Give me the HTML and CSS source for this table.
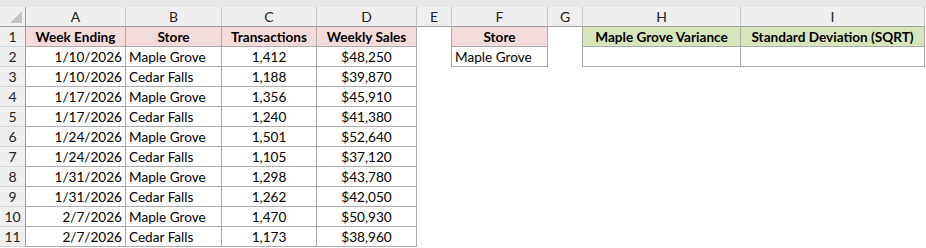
FILE: index.html
```html
<!DOCTYPE html>
<html>
<head>
<meta charset="utf-8">
<link rel="stylesheet" href="styles.css">
</head>
<body>
<div class="sheet">
  <div class="strip"></div>
  <div class="grid">
    <div class="ch corner"><span class="tri"></span></div>
    <div class="ch">A</div><div class="ch">B</div><div class="ch">C</div><div class="ch">D</div><div class="ch">E</div><div class="ch">F</div><div class="ch">G</div><div class="ch">H</div><div class="ch">I</div>

    <div class="rn">1</div>
    <div class="c b hdr pink">Week Ending</div><div class="c b hdr pink">Store</div><div class="c b hdr pink">Transactions</div><div class="c b hdr pink">Weekly Sales</div>
    <div class="c br"></div><div class="c b hdr pink">Store</div><div class="c br"></div>
    <div class="c b hdr green">Maple Grove Variance</div><div class="c b hdr green">Standard Deviation (SQRT)</div>

    <div class="rn">2</div>
    <div class="c b r">1/10/2026</div><div class="c b l">Maple Grove</div><div class="c b m">1,412</div><div class="c b m">$48,250</div>
    <div class="c br"></div><div class="c b l">Maple Grove</div><div class="c br"></div><div class="c b"></div><div class="c b"></div>

    <div class="rn">3</div>
    <div class="c b r">1/10/2026</div><div class="c b l">Cedar Falls</div><div class="c b m">1,188</div><div class="c b m">$39,870</div>
    <div class="c"></div><div class="c"></div><div class="c"></div><div class="c"></div><div class="c"></div>

    <div class="rn">4</div>
    <div class="c b r">1/17/2026</div><div class="c b l">Maple Grove</div><div class="c b m">1,356</div><div class="c b m">$45,910</div>
    <div class="c"></div><div class="c"></div><div class="c"></div><div class="c"></div><div class="c"></div>

    <div class="rn">5</div>
    <div class="c b r">1/17/2026</div><div class="c b l">Cedar Falls</div><div class="c b m">1,240</div><div class="c b m">$41,380</div>
    <div class="c"></div><div class="c"></div><div class="c"></div><div class="c"></div><div class="c"></div>

    <div class="rn">6</div>
    <div class="c b r">1/24/2026</div><div class="c b l">Maple Grove</div><div class="c b m">1,501</div><div class="c b m">$52,640</div>
    <div class="c"></div><div class="c"></div><div class="c"></div><div class="c"></div><div class="c"></div>

    <div class="rn">7</div>
    <div class="c b r">1/24/2026</div><div class="c b l">Cedar Falls</div><div class="c b m">1,105</div><div class="c b m">$37,120</div>
    <div class="c"></div><div class="c"></div><div class="c"></div><div class="c"></div><div class="c"></div>

    <div class="rn">8</div>
    <div class="c b r">1/31/2026</div><div class="c b l">Maple Grove</div><div class="c b m">1,298</div><div class="c b m">$43,780</div>
    <div class="c"></div><div class="c"></div><div class="c"></div><div class="c"></div><div class="c"></div>

    <div class="rn">9</div>
    <div class="c b r">1/31/2026</div><div class="c b l">Cedar Falls</div><div class="c b m">1,262</div><div class="c b m">$42,050</div>
    <div class="c"></div><div class="c"></div><div class="c"></div><div class="c"></div><div class="c"></div>

    <div class="rn">10</div>
    <div class="c b r">2/7/2026</div><div class="c b l">Maple Grove</div><div class="c b m">1,470</div><div class="c b m">$50,930</div>
    <div class="c"></div><div class="c"></div><div class="c"></div><div class="c"></div><div class="c"></div>

    <div class="rn">11</div>
    <div class="c b r">2/7/2026</div><div class="c b l">Cedar Falls</div><div class="c b m">1,173</div><div class="c b m">$38,960</div>
    <div class="c"></div><div class="c"></div><div class="c"></div><div class="c"></div><div class="c"></div>
  </div>
</div>
</body>
</html>
```

FILE: styles.css
```css
html, body {
  margin: 0;
  padding: 0;
  background: #ffffff;
}
.sheet {
  width: 926px;
  height: 248px;
  overflow: hidden;
  font-family: Lato, "Open Sans", "Liberation Sans", sans-serif;
  font-size: 13.6px;
  color: #000;
}
.strip {
  height: 7px;
  background: #e6e6e6;
}
.grid {
  display: grid;
  grid-template-columns: 26px 100px 96px 95px 100px 35px 96px 35px 158px 184px;
  grid-auto-rows: 20px;
}
.grid > div {
  box-sizing: border-box;
  white-space: nowrap;
  overflow: hidden;
  line-height: 20px;
}
.ch {
  background: #efefef;
  border-right: 1px solid #c8c8c8;
  border-bottom: 1px solid #a0a0a0;
  text-align: center;
  color: #222;
  font-size: 14px;
}
.corner {
  position: relative;
  border-right-color: #a0a0a0;
}
.tri {
  position: absolute;
  right: 3px;
  bottom: 3px;
  width: 0;
  height: 0;
  border-left: 12px solid transparent;
  border-bottom: 12px solid #c4c4c4;
}
.rn {
  background: #efefef;
  border-right: 1px solid #a0a0a0;
  border-bottom: 1px solid #d4d4d4;
  text-align: center;
  color: #222;
  font-size: 14px;
}
.b {
  border-right: 1px solid #ababab;
  border-bottom: 1px solid #ababab;
}
.br {
  border-right: 1px solid #ababab;
}
.hdr {
  font-weight: 700;
  text-align: center;
}
.pink { background: #f2dcdb; }
.green { background: #d8e4bc; }
.r { text-align: right; padding-right: 3px; }
.l { text-align: left; padding-left: 3px; }
.m { text-align: center; }
```
